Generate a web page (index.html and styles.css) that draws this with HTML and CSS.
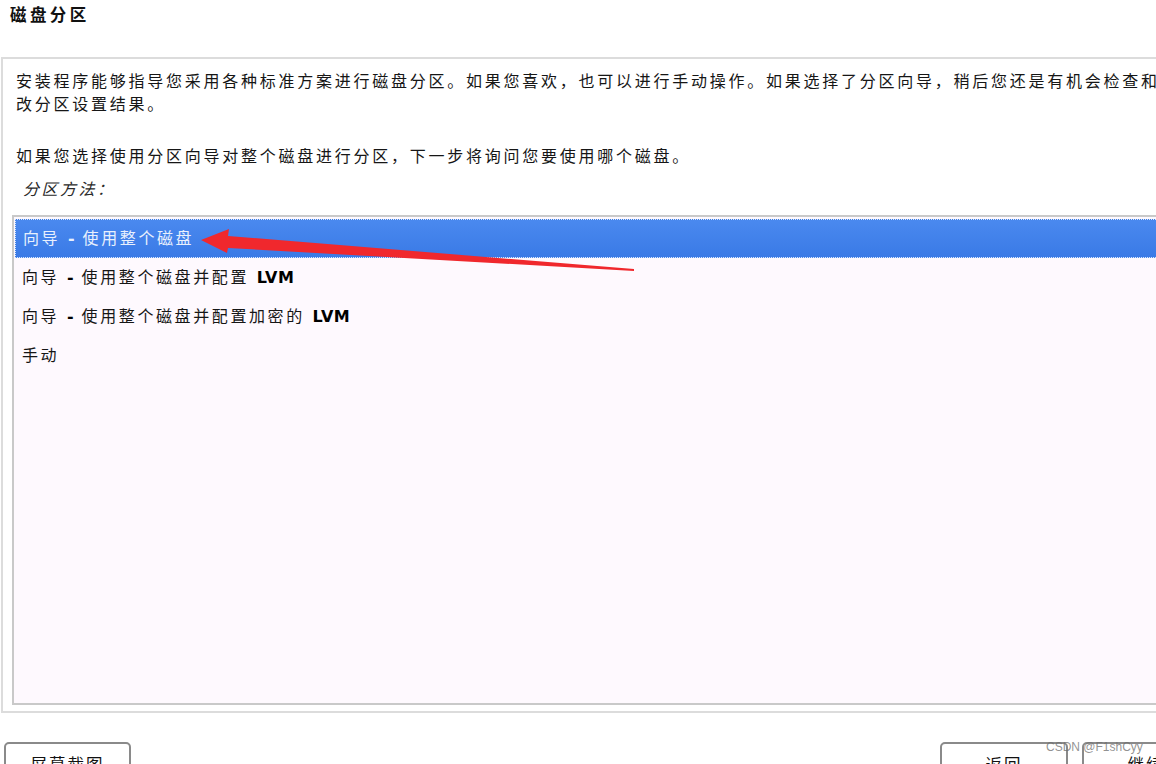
FILE: index.html
```html
<!DOCTYPE html>
<html lang="zh-CN">
<head>
<meta charset="utf-8">
<title>磁盘分区</title>
<link rel="stylesheet" href="styles.css">
</head>
<body>
<div class="page">
  <h1 class="title">磁盘分区</h1>
  <div class="panel">
    <p class="para"><span class="line">安装程序能够指导您采用各种标准方案进行磁盘分区。如果您喜欢，也可以进行手动操作。如果选择了分区向导，稍后您还是有机会检查和修</span><br>改分区设置结果。</p>
    <p class="para para2">如果您选择使用分区向导对整个磁盘进行分区，下一步将询问您要使用哪个磁盘。</p>
    <p class="label">分区方法：</p>
    <div class="list">
      <div class="row selected">向导 <b>-</b> 使用整个磁盘</div>
      <div class="row">向导 <b>-</b> 使用整个磁盘并配置 <b>LVM</b></div>
      <div class="row">向导 <b>-</b> 使用整个磁盘并配置加密的 <b>LVM</b></div>
      <div class="row">手动</div>
    </div>
  </div>
  <div class="buttons">
    <button class="btn">屏幕截图</button>
    <div class="right">
      <button class="btn">返回</button>
      <button class="btn">继续</button>
    </div>
  </div>
  <svg class="arrow" width="1156" height="764" viewBox="0 0 1156 764">
    <polygon points="201,240 229,229 228,236 634,269 634,271 228,248 227,253" fill="#f0282d"/>
  </svg>
  <div class="watermark">CSDN @F1shCyy</div>
</div>
</body>
</html>
```
FILE: styles.css
```css
html, body {
  margin: 0;
  padding: 0;
  background: #ffffff;
  overflow: hidden;
}
body {
  width: 1156px;
  height: 764px;
  font-family: "DejaVu Sans", "Noto Sans CJK SC", sans-serif;
  color: #1e1e1e;
}
.page {
  position: relative;
  width: 1156px;
  height: 764px;
  overflow: hidden;
}
.title {
  margin: 0 0 31px 0;
  padding: 6px 0 0 10px;
  font-size: 16.5px;
  line-height: 20px;
  letter-spacing: 3.4px;
  font-weight: bold;
  color: #111;
}
.panel {
  margin-left: 1px;
  margin-right: -40px;
  border: 2px solid #dcdcdc;
  padding: 11px 0 6px 0;
}
.para {
  margin: 0;
  padding-left: 13px;
  font-size: 16px;
  line-height: 23px;
  letter-spacing: 2.75px;
  white-space: nowrap;
  color: #161616;
}
.para2 {
  margin-top: 29px;
}
.label {
  margin: 10px 0 0 0;
  padding-left: 20px;
  font-size: 16px;
  line-height: 23px;
  letter-spacing: 2.5px;
  font-style: italic;
  color: #2a2a2a;
}
.list {
  margin: 14px 0 0 9px;
  height: 484px;
  border: 2px solid #c9c9c9;
  border-right: none;
  background: #fef9fe;
  padding-top: 2px;
  box-sizing: content-box;
}
.row {
  height: 39px;
  line-height: 39px;
  padding-left: 8px;
  font-size: 16px;
  letter-spacing: 2.6px;
  white-space: nowrap;
  color: #161616;
  box-sizing: border-box;
}
.row b {
  font-weight: bold;
  letter-spacing: 0.4px;
  color: #000;
}
.row.selected {
  background: linear-gradient(#4a89ef, #3a7ae6);
  color: #e8f0fd;
  border: 1px dotted #dbe8fb;
  border-right: none;
  line-height: 37px;
  padding-left: 7px;
  margin-left: 1px;
}
.row.selected b {
  color: #e8f0fd;
}
.buttons {
  display: flex;
  justify-content: space-between;
  align-items: flex-start;
  margin-top: 29px;
  padding-left: 4px;
  margin-right: -54px;
}
.right {
  display: flex;
  gap: 14px;
}
.btn {
  width: 127px;
  height: 38px;
  background: #ffffff;
  border: 2px solid #8a8a8a;
  border-radius: 5px;
  font-family: "DejaVu Sans", "Noto Sans CJK SC", sans-serif;
  font-size: 16.5px;
  letter-spacing: 2px;
  color: #111;
  padding-top: 6px;
}
.right .btn {
  width: 128px;
}
.arrow {
  position: absolute;
  left: 0;
  top: 0;
  pointer-events: none;
}
.watermark {
  position: absolute;
  left: 1046px;
  top: 739px;
  font-family: "Liberation Sans", sans-serif;
  font-size: 12px;
  line-height: 16px;
  color: rgba(110, 110, 110, 0.75);
}
```
